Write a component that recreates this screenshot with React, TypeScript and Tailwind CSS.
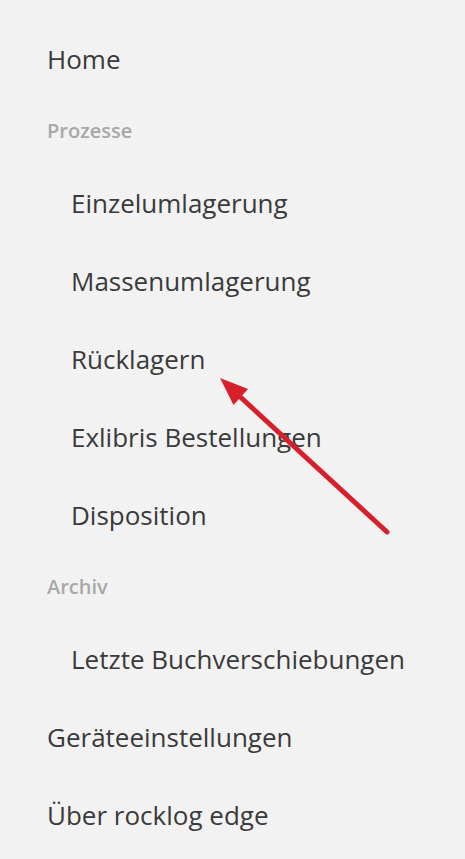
const sections = [
  { label: "Home", level: 0 },
  { label: "Prozesse", level: -1 },
  { label: "Einzelumlagerung", level: 1 },
  { label: "Massenumlagerung", level: 1 },
  { label: "Rücklagern", level: 1 },
  { label: "Exlibris Bestellungen", level: 1 },
  { label: "Disposition", level: 1 },
  { label: "Archiv", level: -1 },
  { label: "Letzte Buchverschiebungen", level: 1 },
  { label: "Geräteeinstellungen", level: 0 },
  { label: "Über rocklog edge", level: 0 },
];

function NavItem({ label, level }: { label: string; level: number }) {
  if (level < 0) {
    return (
      <div className="h-[66px] pl-[47px] text-[20px] leading-[66px] font-semibold text-[#a8a8a8]">
        {label}
      </div>
    );
  }
  return (
    <div
      className={
        level === 1
          ? "h-[78px] pl-[71px] text-[26px] leading-[78px] text-[#3a3a3a]"
          : "h-[78px] pl-[47px] text-[26px] leading-[78px] text-[#3a3a3a]"
      }
    >
      {label}
    </div>
  );
}

export default function App() {
  return (
    <div
      className="relative h-[859px] w-[465px] overflow-hidden bg-[#f2f2f2] pt-5"
      style={{ fontFamily: '"Open Sans", "Noto Sans", sans-serif' }}
    >
      <nav className="flex flex-col">
        {sections.map((s) => (
          <NavItem key={s.label} label={s.label} level={s.level} />
        ))}
      </nav>

      {/* annotation arrow */}
      <svg
        className="pointer-events-none absolute inset-0"
        width="465"
        height="859"
        viewBox="0 0 465 859"
      >
        <line
          x1="387"
          y1="532"
          x2="236"
          y2="393"
          stroke="#d7202c"
          strokeWidth="5"
          strokeLinecap="round"
        />
        <polygon points="220,378 248,389 233.5,405" fill="#d7202c" />
      </svg>
    </div>
  );
}
